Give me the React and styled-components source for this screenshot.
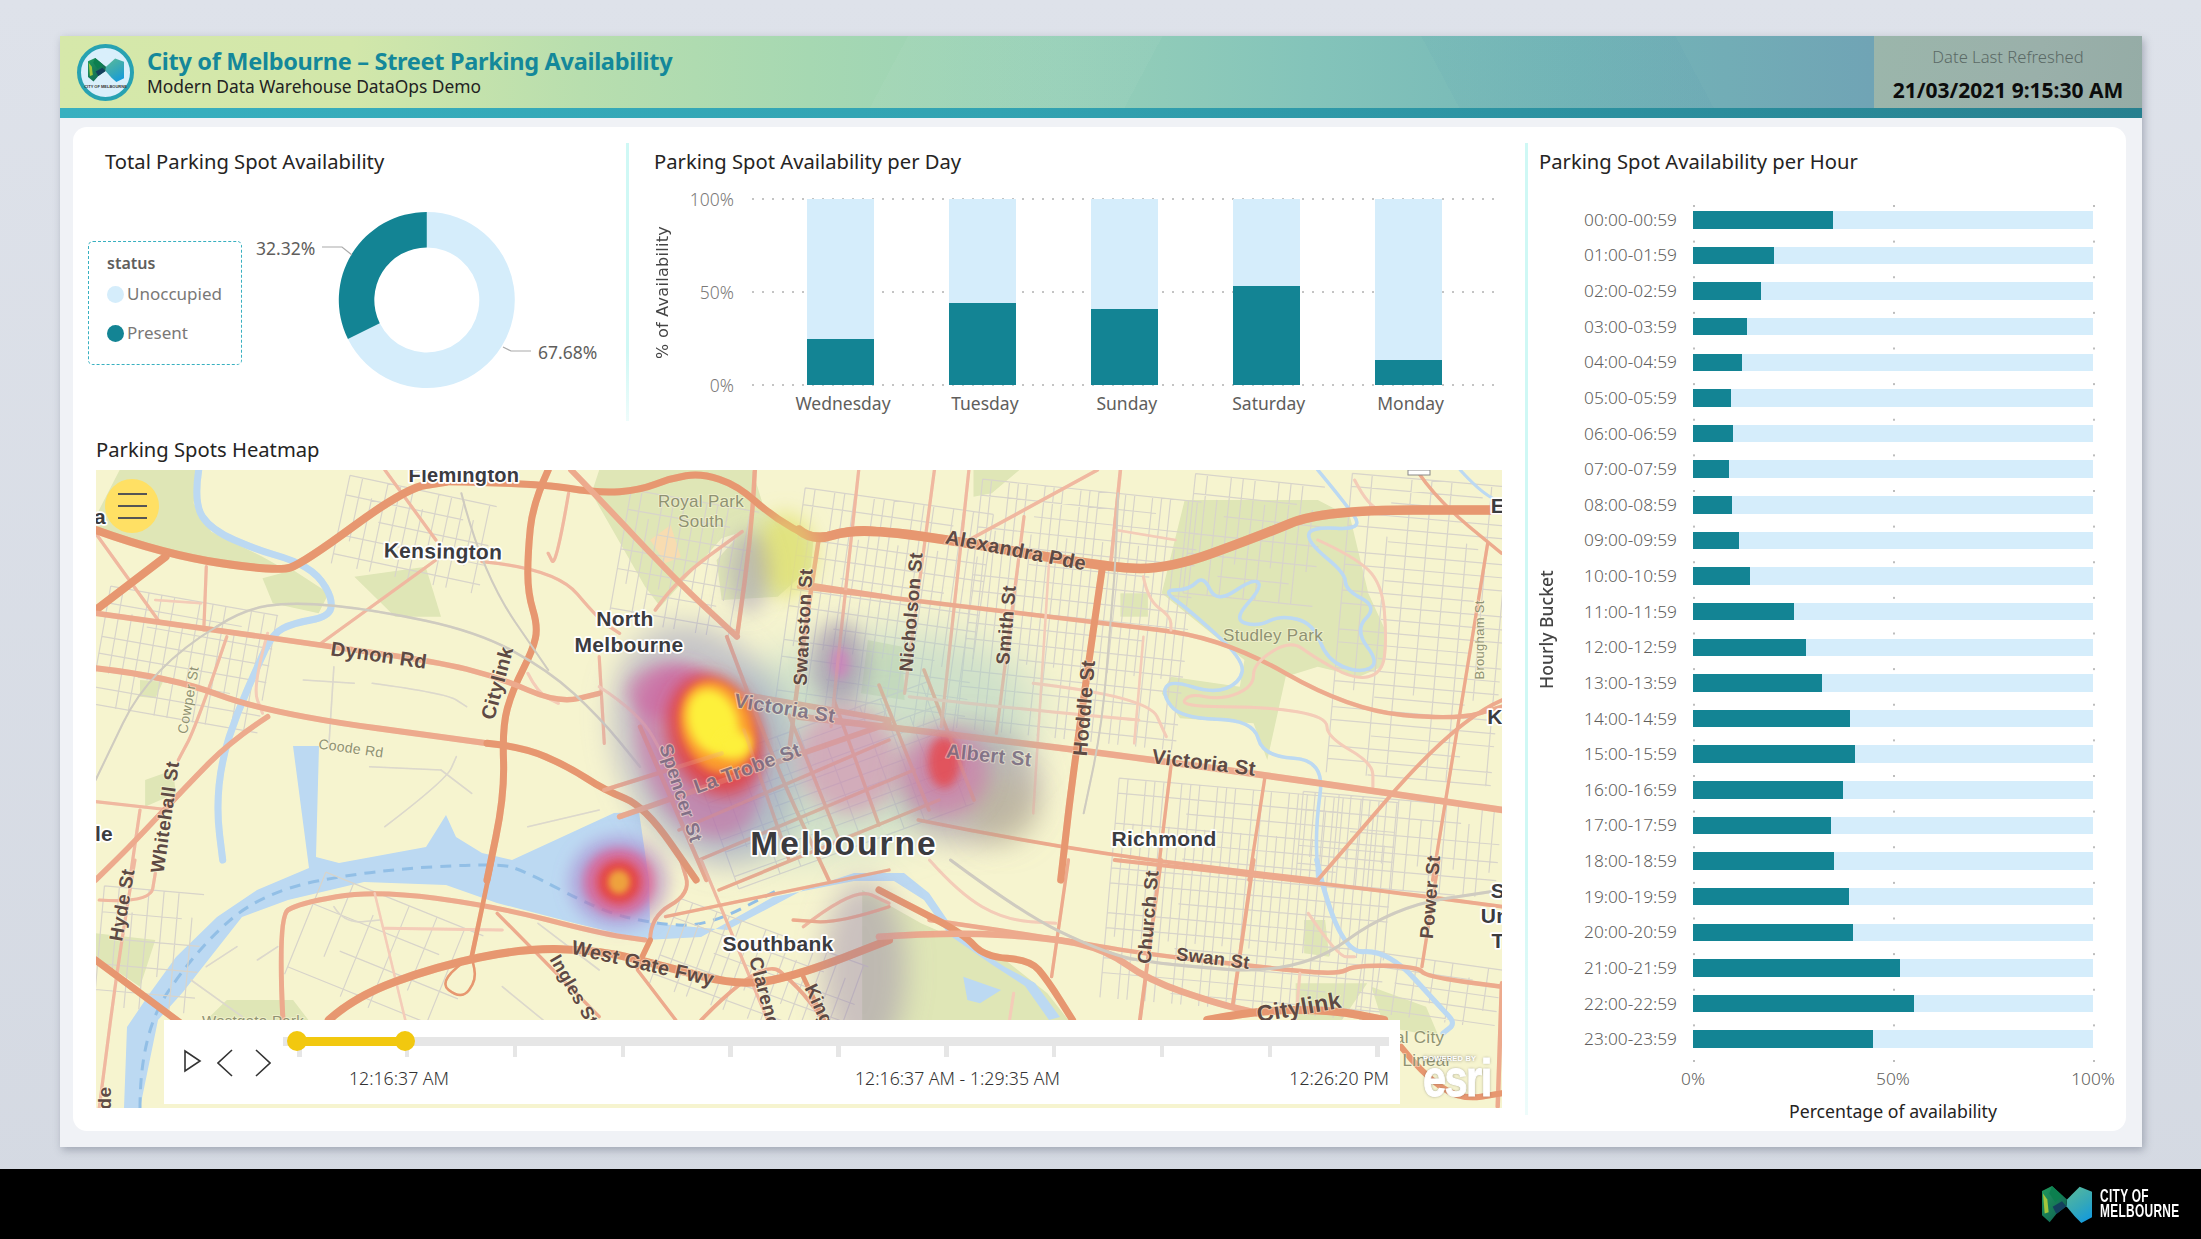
import React from 'react';
import styled, { createGlobalStyle } from 'styled-components';

const TEAL = '#138494';
const PALE = '#d5edfb';
const UI_FONT = '"Noto Sans", "Open Sans", sans-serif';
const MAP_FONT = '"Liberation Sans", Arial, sans-serif';

const GlobalStyle = createGlobalStyle`
  html, body { margin: 0; padding: 0; background: #dde1e9; }
  body { font-family: ${UI_FONT}; }
`;

/* Page shell */

const Page = styled.div`
  width: 2201px;
  height: 1239px;
  display: flex;
  flex-direction: column;
  overflow: hidden;
  background: linear-gradient(180deg, #dee2ea 0%, #d4d9e2 100%);
`;

const Stage = styled.main`
  flex: 1;
  min-height: 0;
  display: flex;
  padding: 36px 59px 22px 60px;
`;

const Report = styled.div`
  flex: 1;
  display: flex;
  flex-direction: column;
  background: #f0f2f6;
  box-shadow: 2px 3px 8px rgba(60, 70, 90, 0.35);
`;

const Header = styled.header`
  height: 72px;
  display: flex;
  align-items: stretch;
  background:
    linear-gradient(118deg, transparent 0 40%, rgba(255, 255, 255, 0.035) 40% 52%, transparent 52%),
    linear-gradient(62deg, transparent 0 66%, rgba(60, 130, 170, 0.05) 66% 78%, transparent 78%),
    linear-gradient(90deg, #d6e8aa 0%, #d2e7aa 14%, #b8deae 25%, #a6d8b2 36%, #97d0b8 48%, #84c4ba 60%, #74b6b7 73%, #70a4b5 87%, #7292b3 100%);
`;

const Brand = styled.div`
  flex: 1;
  display: flex;
  align-items: center;
  gap: 13px;
  padding-left: 17px;
`;

const Badge = styled.div`
  width: 57px;
  height: 57px;
  box-sizing: border-box;
  border: 4px solid #27a2b2;
  border-radius: 50%;
  background: #d9effb;
  display: flex;
  flex-direction: column;
  align-items: center;
  justify-content: center;
  gap: 2px;
  padding-top: 2px;
`;

const BadgeText = styled.span`
  font: 700 4px/5px ${MAP_FONT};
  color: #333;
  white-space: nowrap;
`;

const BrandText = styled.div`
  display: flex;
  flex-direction: column;
`;

const ReportTitle = styled.h1`
  margin: 0;
  font: 700 23.5px/30px ${UI_FONT};
  letter-spacing: -0.3px;
  color: #14889a;
  white-space: nowrap;
`;

const ReportSubtitle = styled.div`
  margin-top: -2px;
  font: 400 17.4px/24px ${UI_FONT};
  color: #222;
  white-space: nowrap;
`;

const DateBox = styled.div`
  width: 268px;
  display: flex;
  flex-direction: column;
  align-items: center;
  background: linear-gradient(100deg, #9bb6ab, #9ab0aa 60%, #95aca6);
`;

const DateLabel = styled.div`
  margin-top: 9px;
  font: 300 16.6px/24px ${UI_FONT};
  color: #5b6a66;
`;

const DateValue = styled.div`
  margin-top: 8px;
  font: 700 21px/26px ${UI_FONT};
  color: #0c0c0c;
  white-space: nowrap;
`;

const AccentBar = styled.div`
  height: 10px;
  background: linear-gradient(90deg, #38b0c0 0%, #32a3b2 45%, #27808f 100%);
`;

const Body = styled.div`
  flex: 1;
  min-height: 0;
  display: flex;
  padding: 9px 16px 16px 13px;
`;

const Panel = styled.div`
  flex: 1;
  display: grid;
  grid-template-columns: 1452px 1fr;
  background: #fff;
  border-radius: 14px;
`;

const LeftColumn = styled.div`
  display: flex;
  flex-direction: column;
`;

const TopRow = styled.div`
  height: 308px;
  display: grid;
  grid-template-columns: 553px 1fr;
`;

const Section = styled.section`
  position: relative;
  min-width: 0;
  padding-top: 20px;
  padding-left: ${p => p.$inset}px;
  ${p => p.$divider && `
    &::before {
      content: '';
      position: absolute;
      left: 0;
      top: 16px;
      bottom: ${p.$divider}px;
      width: 3px;
      background: linear-gradient(180deg, #cff8f5 0%, #cff8f5 75%, #eefcfb 100%);
    }
  `}
`;

const SectionTitle = styled.h2`
  margin: 0;
  font: 400 20.2px/28px ${UI_FONT};
  color: #252423;
  white-space: nowrap;
`;

/* Donut */

const DonutRow = styled.div`
  display: flex;
  align-items: flex-start;
  margin-top: 25px;
  margin-left: -17px;
`;

const Legend = styled.div`
  width: 154px;
  height: 124px;
  box-sizing: border-box;
  margin-top: 41px;
  margin-right: 8px;
  padding: 9px 0 0 18px;
  border: 1.5px dashed #38b0c0;
  border-radius: 5px;
`;

const LegendTitle = styled.div`
  font: 600 16px/24px ${UI_FONT};
  color: #605e5c;
`;

const LegendItem = styled.div`
  display: flex;
  align-items: center;
  gap: 3px;
  margin-top: ${p => p.$gap}px;
  font: 400 17px/24px ${UI_FONT};
  color: #7a7876;
`;

const LegendDot = styled.span`
  width: 17px;
  height: 17px;
  border-radius: 50%;
  background: ${p => p.$color};
`;

const DonutLabel = styled.text`
  font: 400 17.5px ${UI_FONT};
  fill: #605e5c;
`;

/* Charts */

const DayChart = styled.div`
  display: flex;
  margin-top: 24px;
  margin-left: -6px;
`;

const VerticalTitle = styled.div`
  writing-mode: vertical-rl;
  transform: rotate(180deg);
  text-align: center;
  white-space: nowrap;
  width: ${p => p.$width}px;
  height: ${p => p.$height}px;
  color: #444;
  font: ${p => p.$wide ? `400 16px/${p.$width}px "DejaVu Sans", sans-serif` : `500 17.6px/${p.$width}px ${UI_FONT}`};
  letter-spacing: ${p => (p.$wide ? 0.3 : 0)}px;
`;

const DayTicks = styled.div`
  width: 56px;
  height: 210px;
  margin-top: -12px;
  display: flex;
  flex-direction: column;
  justify-content: space-between;
  align-items: flex-end;
  font: 300 17.5px/24px ${UI_FONT};
  color: #7b7977;
`;

const DayPlot = styled.div`
  width: 748px;
  margin-left: 18px;
`;

const DayBars = styled.div`
  position: relative;
  height: 186px;
  display: flex;
  gap: 74.9px;
  padding-left: 55px;
`;

const GridLine = styled.i`
  position: absolute;
  left: 0;
  right: 0;
  top: ${p => p.$top}%;
  height: 2px;
  margin-top: -1px;
  background: repeating-linear-gradient(90deg, #c4c4c4 0 2px, transparent 2px 10px);
`;

const DayBar = styled.div`
  position: relative;
  width: 67px;
  height: 100%;
  display: flex;
  align-items: flex-end;
  background: ${PALE};
`;

const DayFill = styled.div`
  width: 100%;
  background: ${TEAL};
`;

const DayLabels = styled.div`
  display: flex;
  gap: 74.9px;
  padding-left: 55px;
  margin-top: 6px;
`;

const DayLabel = styled.div`
  width: 67px;
  padding-left: 5px;
  box-sizing: border-box;
  display: flex;
  justify-content: center;
  font: 400 17.5px/24px ${UI_FONT};
  color: #605e5c;
`;

const HourChart = styled.div`
  display: flex;
  margin-top: 27px;
  margin-left: -6px;
`;

const HourAxisWrap = styled.div`
  width: 26px;
  height: 856px;
  display: flex;
  align-items: center;
`;

const HourMain = styled.div`
  display: flex;
  flex-direction: column;
`;

const HourRows = styled.div`
  position: relative;
  display: flex;
  flex-direction: column;
`;

const HourRow = styled.div`
  height: 35.64px;
  display: flex;
  align-items: center;
  gap: 16px;
`;

const HourLabel = styled.div`
  width: 118px;
  text-align: right;
  font: 300 17.3px/24px ${UI_FONT};
  color: #605e5c;
  white-space: nowrap;
`;

const HourTrack = styled.div`
  position: relative;
  width: 400px;
  height: 17.5px;
  background: ${PALE};
`;

const HourFill = styled.div`
  height: 100%;
  background: ${TEAL};
`;

const VGrid = styled.i`
  position: absolute;
  top: 3px;
  bottom: -5px;
  left: ${p => 134 + p.$pct * 4}px;
  width: 2px;
  background: repeating-linear-gradient(180deg, #bdbdbd 0 2px, transparent 2px 35.64px);
  background-size: 2px 35.64px;
`;

const HourTicks = styled.div`
  display: flex;
  justify-content: space-between;
  width: 400px;
  margin-left: 134px;
  margin-top: 10px;
`;

const HourTick = styled.div`
  width: 0;
  display: flex;
  justify-content: center;
  font: 300 17.3px/24px ${UI_FONT};
  color: #605e5c;
`;

const HourAxisTitle = styled.div`
  width: 400px;
  margin-left: 134px;
  margin-top: 6px;
  text-align: center;
  font: 400 17.7px/28px ${UI_FONT};
  color: #252423;
`;

/* Map */

const HeatmapBlock = styled.div`
  padding-left: 23px;
`;

const MapFrame = styled.div`
  position: relative;
  width: 1406px;
  height: 638px;
  margin-top: 7px;
  overflow: hidden;
  background: #f6f4cf;
`;

const MapSvg = styled.svg`
  display: block;
  width: 1406px;
  height: 638px;
`;

const MapText = styled.text`
  font-family: ${MAP_FONT};
  font-size: ${p => p.$size}px;
  font-weight: ${p => (p.$kind === 'muted' ? 400 : 700)};
  letter-spacing: ${p => (p.$size > 24 ? 2 : 0.3)}px;
  fill: ${p => ({ place: '#3b3b3f', road: '#5e4a44', muted: '#8f9272', faded: '#6d5f78' }[p.$kind])};
  fill-opacity: ${p => (p.$kind === 'faded' ? 0.8 : 1)};
  paint-order: stroke;
  stroke: ${p => (p.$kind === 'place' ? '#fff' : 'rgba(255,250,225,.45)')};
  stroke-width: ${p => (p.$kind === 'place' ? 3.5 : 2)}px;
  stroke-linejoin: round;
  text-anchor: middle;
  dominant-baseline: central;
`;

const MenuButton = styled.button`
  position: absolute;
  left: 9px;
  top: 9px;
  width: 54px;
  height: 54px;
  border: 0;
  padding: 0;
  border-radius: 50%;
  background: #ffe064;
  display: flex;
  flex-direction: column;
  align-items: center;
  justify-content: center;
  gap: 10px;
`;

const MenuLine = styled.span`
  width: 29px;
  height: 2px;
  background: #555;
`;

const EsriMark = styled.div`
  position: absolute;
  right: 9px;
  bottom: 2px;
  width: 70px;
  height: 52px;
  color: #fff;
  text-shadow: 0 0 3px rgba(60, 60, 60, 0.6);
`;

const EsriSmall = styled.div`
  font: 700 7.5px/10px ${MAP_FONT};
  letter-spacing: 0.2px;
  white-space: nowrap;
`;

const EsriWord = styled.div`
  margin-top: -12px;
  font: 700 52px/52px ${MAP_FONT};
  letter-spacing: -2px;
  -webkit-text-stroke: 1px #fff;
  transform: scaleX(0.8);
  transform-origin: left center;
`;

const TimeBar = styled.div`
  position: absolute;
  left: 68px;
  bottom: 4px;
  width: 1236px;
  height: 84px;
  display: flex;
  background: #fff;
`;

const PlayControls = styled.div`
  width: 119px;
  padding: 29px 0 0 20px;
  box-sizing: border-box;
  display: flex;
  align-items: flex-start;
  gap: 15px;
`;

const ControlIcon = styled.svg`
  display: block;
  fill: none;
  stroke: #333;
  stroke-width: 1.6;
  margin-left: ${p => p.$shift || 0}px;
`;

const Timeline = styled.div`
  width: 1106px;
  padding-top: 17px;
`;

const Track = styled.div`
  position: relative;
  height: 8.5px;
  background: #e6e6e6;
`;

const TrackRange = styled.div`
  position: absolute;
  top: 0;
  bottom: 0;
  left: 14px;
  width: 108px;
  background: #f2c80f;
`;

const Handle = styled.span`
  position: absolute;
  top: -6px;
  left: ${p => p.$left}px;
  width: 20px;
  height: 20px;
  border-radius: 50%;
  background: #f2c80f;
`;

const TickRow = styled.div`
  display: flex;
  justify-content: space-between;
  padding: 0 9px 0 14px;
`;

const Tick = styled.span`
  width: 4.5px;
  height: 11px;
  background: #e6e6e6;
`;

const TimeLabels = styled.div`
  display: flex;
  margin-top: 9px;
  padding: 0 0 0 66px;
  font: 300 17.7px/24px ${UI_FONT};
  color: #333;
  white-space: nowrap;
`;

const TimeMiddle = styled.span`
  margin-left: 406px;
`;

const TimeEnd = styled.span`
  margin-left: auto;
`;

/* Footer */

const Footer = styled.footer`
  height: 70px;
  display: flex;
  align-items: center;
  justify-content: flex-end;
  gap: 8px;
  padding-right: 20px;
  background: #000;
`;

const FooterWords = styled.div`
  width: 81px;
  color: #fff;
  font: 700 18px/15.5px ${MAP_FONT};
  letter-spacing: 0.5px;
  white-space: nowrap;
`;

const FooterWord = styled.div`
  transform: scaleX(0.66);
  transform-origin: left center;
`;

/* Data */

const DAYS = [
  { name: 'Wednesday', pct: 24.5 },
  { name: 'Tuesday', pct: 44 },
  { name: 'Sunday', pct: 41 },
  { name: 'Saturday', pct: 53.3 },
  { name: 'Monday', pct: 13.6 },
];

const HOURS = [34.9, 20.3, 17.1, 13.6, 12.2, 9.4, 10.1, 9.0, 9.8, 11.5, 14.3, 25.2, 28.3, 32.2, 39.2, 40.6, 37.4, 34.6, 35.3, 39.1, 39.9, 51.8, 55.2, 45];
const pad = n => String(n).padStart(2, '0');

// the map svg is written in screenshot pixels; the zones are the crops I read the roads from
const ZONE = {
  0: (x, y) => [x, y],
  5: (x, y) => [90 + x / 1.96, 460 + y / 3],
  6: (x, y) => [800 + x / 2.178, 460 + y / 3],
  7: (x, y) => [90 + x / 1.96, 860 + y / 3],
  8: (x, y) => [880 + x / 2.376, 860 + y / 3],
};

const ROAD_COLORS = { a: '#e79770', b: '#edaa8d', c: '#f0b8a0', d: '#f4ccb8', w: '#bcd9f2', r: '#cfcbc0', g: '#dcd8cc' };

const smooth = (zone, flat) => {
  const pts = [];
  for (let i = 0; i < flat.length; i += 2) pts.push(ZONE[zone](flat[i], flat[i + 1]));
  let d = `M${pts[0][0].toFixed(1)} ${pts[0][1].toFixed(1)}`;
  for (let i = 1; i < pts.length - 1; i++) {
    const mx = (pts[i][0] + pts[i + 1][0]) / 2;
    const my = (pts[i][1] + pts[i + 1][1]) / 2;
    d += `Q${pts[i][0].toFixed(1)} ${pts[i][1].toFixed(1)} ${mx.toFixed(1)} ${my.toFixed(1)}`;
  }
  const last = pts[pts.length - 1];
  return `${d}L${last[0].toFixed(1)} ${last[1].toFixed(1)}`;
};

const poly = (zone, flat) => {
  const out = [];
  for (let i = 0; i < flat.length; i += 2) out.push(ZONE[zone](flat[i], flat[i + 1]).map(v => v.toFixed(1)).join(','));
  return out.join(' ');
};

const PARKS = [
  [5, [1000, 30, 1300, 30, 1320, 130, 1350, 190, 1420, 240, 1415, 320, 1350, 410, 1240, 420, 1230, 300, 1280, 215, 1240, 235, 1120, 440, 1090, 380, 985, 100]],
  [5, [60, 30, 215, 30, 205, 130, 240, 215, 340, 290, 380, 325, 250, 300, 150, 270, 13, 205, 13, 170]],
  [5, [340, 355, 400, 330, 470, 400, 450, 460, 360, 430]],
  [5, [520, 350, 660, 320, 690, 470, 600, 470]],
  [5, [100, 660, 145, 665, 130, 715, 100, 710]],
  [5, [110, 960, 165, 930, 170, 1000, 110, 1040]],
  [6, [840, 120, 1130, 120, 1200, 170, 1240, 400, 1280, 520, 1270, 620, 1220, 650, 1130, 620, 1060, 650, 1020, 900, 990, 790, 830, 775, 790, 700, 810, 650, 960, 680, 970, 600, 790, 400]],
  [6, [150, 540, 225, 560, 230, 720, 135, 700]],
  [6, [380, 30, 480, 30, 420, 100, 380, 110]],
  [6, [700, 400, 760, 400, 760, 470, 700, 470]],
  [8, [-40, 90, 100, 190, 300, 300, 400, 400, 450, 480, -40, 480]],
  [8, [990, 370, 1160, 370, 1100, 480, 990, 480]],
  [8, [1170, 380, 1300, 440, 1330, 530, 1200, 500]],
  [8, [1010, 180, 1060, 180, 1070, 290, 1010, 280]],
  [7, [230, 480, 270, 420, 400, 420, 430, 480]],
  [7, [13, 220, 130, 240, 100, 380, 13, 290]],
];

const ROADS = [
  // water courses drawn as lines
  [5, 'w', 7, [215, 30, 205, 130, 240, 210, 330, 270, 400, 300, 450, 345, 478, 420, 470, 470, 400, 490, 360, 520, 330, 620, 290, 760, 260, 900, 250, 1050, 262, 1200]],
  [6, 'w', 3.5, [1130, 30, 1190, 130, 1230, 210, 1110, 200, 1110, 250, 1190, 340, 1190, 390, 1260, 440, 1210, 510, 1265, 610, 1220, 640, 1150, 600, 1120, 490, 1050, 465, 1000, 500, 945, 480, 1010, 380, 990, 355, 910, 430, 880, 345, 850, 390, 790, 390, 850, 450, 970, 600, 960, 670, 900, 700, 810, 660, 790, 700, 830, 775, 990, 780, 1010, 890, 1145, 900, 1125, 1100, 1130, 1260]],
  [6, 'w', 3, [1440, 30, 1480, 90, 1530, 130]],
  [8, 'w', 5, [1040, 0, 1090, 280, 1210, 270, 1340, 450, 1370, 490, 1340, 520]],
  // faint back streets
  [5, 'g', 1.6, [420, 660, 520, 670]],
  [5, 'g', 1.6, [555, 670, 700, 700, 740, 740]],
  [5, 'g', 1.6, [550, 920, 690, 930]],
  [5, 'g', 1.6, [580, 1100, 700, 960, 720, 890]],
  [5, 'g', 1.6, [690, 930, 750, 1000]],
  [5, 'g', 1.6, [480, 620, 470, 860]],
  [5, 'g', 1.6, [860, 1100, 1000, 1050]],
  [7, 'g', 1.6, [230, 320, 290, 260]],
  [7, 'g', 1.6, [330, 300, 370, 260]],
  [7, 'g', 1.6, [480, 140, 500, 190, 570, 180]],
  [7, 'g', 1.6, [810, 380, 890, 480]],
  [7, 'g', 1.6, [880, 190, 1000, 330]],
  [7, 'g', 1.6, [200, 360, 300, 470]],
  // minor roads
  [5, 'c', 3.2, [270, 530, 210, 800, 175, 900]],
  [5, 'c', 3.2, [230, 320, 225, 510]],
  [5, 'c', 3.2, [13, 220, 140, 490]],
  [5, 'c', 3.2, [680, 300, 450, 555]],
  [5, 'c', 3.2, [770, 305, 915, 325, 1000, 480, 1040, 520]],
  [5, 'c', 3.5, [1110, 450, 1150, 360, 1280, 215]],
  [5, 'c', 3.2, [940, 100, 915, 325, 900, 280]],
  [5, 'c', 3.2, [580, 30, 680, 240]],
  [5, 'c', 3.2, [13, 1025, 160, 1050]],
  [5, 'c', 3.2, [100, 1050, 80, 1260]],
  [5, 'c', 3.2, [1000, 590, 1010, 850]],
  [5, 'd', 3, [860, 640, 880, 700, 920, 730]],
  [5, 'd', 3, [1000, 680, 1080, 760, 1130, 900]],
  [5, 'd', 3, [350, 520, 320, 680, 340, 760]],
  [5, 'd', 2.5, [130, 420, 220, 430]],
  [5, 'b', 4.4, [1305, 30, 1300, 200, 1270, 530]],
  [5, 'b', 4.4, [1430, 240, 1400, 540, 1370, 900]],
  [5, 'b', 4.4, [1080, 800, 1210, 1260]],
  [5, 'b', 3.8, [1250, 530, 1340, 900, 1450, 1260]],
  [5, 'b', 3.8, [1420, 375, 1568, 410]],
  // CBD grid, mostly seen through the heat
  [0, 'b', 3.5, [680, 830, 890, 740]],
  [0, 'b', 3.5, [700, 860, 915, 770]],
  [0, 'b', 3.5, [720, 890, 940, 800]],
  [0, 'b', 3.5, [745, 730, 790, 860]],
  [0, 'b', 3.5, [790, 715, 840, 840]],
  [0, 'b', 3.5, [835, 700, 880, 825]],
  [0, 'b', 3.5, [880, 685, 930, 810]],
  [0, 'b', 3.5, [925, 670, 975, 800]],
  [6, 'c', 3.2, [130, 30, 100, 400, 70, 800]],
  [6, 'c', 3.2, [295, 30, 230, 700]],
  [6, 'c', 3.2, [370, 30, 310, 800]],
  [6, 'c', 3.2, [490, 170, 430, 820]],
  [6, 'c', 3.5, [700, 30, 680, 300]],
  [6, 'c', 3.5, [650, 30, 370, 240]],
  [6, 'b', 4.4, [0, 380, 650, 490, 920, 530, 1200, 750, 1430, 780, 1532, 740]],
  [6, 'b', 3.8, [1532, 720, 1430, 780, 1130, 1260]],
  [6, 'b', 3.3, [1500, 250, 1380, 1260]],
  [6, 'b', 3.3, [810, 920, 780, 1260]],
  [6, 'b', 3.3, [1015, 950, 980, 1260]],
  [6, 'b', 3.3, [1350, 40, 1390, 120, 1530, 280]],
  [6, 'b', 3.8, [260, 1080, 580, 1170, 1130, 1260]],
  [6, 'd', 3, [1210, 60, 1240, 140, 1290, 160]],
  [6, 'd', 3, [1130, 240, 1210, 290, 1270, 370, 1280, 540, 1270, 640, 1210, 660, 1120, 590, 1070, 540, 990, 610, 990, 680, 920, 720, 850, 700, 830, 740, 1020, 740, 1150, 770, 1150, 830, 1250, 910, 1250, 980]],
  [6, 'd', 3, [750, 350, 760, 420, 810, 470, 810, 510]],
  [6, 'd', 3, [510, 670, 760, 710, 800, 830]],
  [6, 'd', 3, [240, 710, 500, 750, 740, 780]],
  [6, 'd', 2.5, [690, 210, 820, 240]],
  [6, 'd', 2.5, [545, 300, 510, 1060]],
  [6, 'd', 2.5, [750, 530, 730, 850]],
  [7, 'c', 3.2, [90, 0, 60, 270, 20, 745]],
  [7, 'c', 3.2, [20, 120, 120, 130, 130, 40]],
  [7, 'b', 5, [380, 480, 370, 170, 410, 130, 560, 90, 800, 140, 1000, 220, 1090, 240]],
  [7, 'd', 3, [580, 205, 810, 210]],
  [7, 'd', 2.5, [560, 100, 620, 480]],
  [7, 'b', 3.3, [800, 160, 1000, 470]],
  [7, 'b', 3.3, [1075, 330, 1150, 480]],
  [7, 'b', 3.8, [1100, 240, 1100, 170, 1180, 100, 1160, 0]],
  [7, 'c', 3.2, [1200, 0, 1330, 480]],
  [7, 'c', 3.2, [1400, 200, 1500, 80, 1568, 130]],
  [7, 'b', 3.8, [1200, 480, 1320, 290, 1390, 380, 1440, 480]],
  [7, 'b', 3.3, [1568, 140, 1470, 190, 1380, 180]],
  [7, 'b', 3.3, [1130, 170, 1568, 30]],
  [8, 'b', 3.3, [450, 0, 410, 350]],
  [8, 'b', 3.8, [670, 0, 620, 480]],
  [8, 'b', 3.8, [890, 0, 840, 440]],
  [8, 'b', 3.3, [1330, 0, 1290, 320]],
  [8, 'b', 3.8, [560, 0, 1060, 70, 1480, 140]],
  [8, 'b', 4.4, [120, 180, 420, 235, 620, 280, 900, 320, 1090, 345, 1130, 315, 1280, 320, 1300, 350, 1480, 380]],
  [8, 'd', 3, [1000, 340, 990, 480]],
  [8, 'd', 3, [1020, 160, 1090, 290, 1130, 290]],
  [8, 'd', 3, [120, 0, 190, 100, 300, 180, 420, 190]],
  [8, 'b', 4.4, [1480, 370, 1470, 740]],
  [8, 'd', 3, [320, 400, 310, 480]],
  // main roads
  [5, 'a', 8, [13, 210, 150, 285, 370, 335, 420, 310, 620, 85, 700, 65]],
  [5, 'a', 7, [700, 65, 880, 70, 1000, 100, 1080, 90, 1140, 55, 1200, 40, 1270, 75, 1340, 170, 1420, 240, 1500, 205, 1568, 215]],
  [5, 'a', 8, [13, 450, 150, 290]],
  [5, 'a', 7, [900, 30, 870, 130, 860, 280, 860, 400, 880, 500, 870, 570, 830, 690, 810, 800, 815, 1000, 780, 1260]],
  [5, 'b', 6, [945, 30, 990, 100, 1150, 360, 1270, 530]],
  [5, 'b', 5.5, [13, 460, 250, 510, 450, 555, 680, 605, 800, 650, 920, 730, 1000, 700]],
  [5, 'b', 6, [13, 625, 160, 650, 350, 760, 780, 850]],
  [5, 'a', 7, [780, 850, 850, 860, 940, 920, 1010, 990, 1090, 1040, 1190, 1260]],
  [5, 'b', 5.5, [350, 770, 280, 840, 190, 980, 80, 1160, 13, 1260]],
  [5, 'b', 5.5, [1040, 1070, 1568, 790]],
  [5, 'b', 4.4, [1010, 990, 1240, 880]],
  [5, 'b', 5.5, [1270, 700, 1568, 780]],
  [6, 'b', 6.6, [0, 770, 500, 850, 1015, 945, 1532, 1050]],
  [6, 'a', 9.5, [0, 210, 30, 245, 120, 205, 310, 235, 660, 320, 800, 330, 1000, 230, 1140, 150, 1532, 150]],
  [6, 'a', 7, [660, 330, 600, 900, 570, 1260]],
  [7, 'a', 8, [470, 480, 520, 410, 680, 320, 850, 265, 1000, 270, 1130, 320, 1280, 380, 1400, 340, 1568, 240]],
  [7, 'a', 4.6, [790, 0, 750, 290]],
  [7, 'a', 2.5, [750, 290, 680, 360, 730, 420, 760, 360, 750, 290]],
  [7, 'a', 7, [13, 300, 180, 490]],
  [7, 'a', 5.5, [1075, 320, 1100, 240]],
  [7, 'a', 4.6, [1400, 350, 1440, 480]],
  [8, 'a', 7, [0, 90, 60, 130, 200, 220, 250, 290, 360, 300, 400, 360, 460, 480]],
  [8, 'b', 6.6, [0, 230, 170, 215, 420, 235, 540, 270, 640, 360, 800, 430, 900, 460]],
  [8, 'a', 8, [780, 480, 900, 450, 1080, 450, 1200, 480]],
  [8, 'a', 6, [1240, 560, 1290, 640, 1380, 720, 1480, 700]],
  // rail
  [5, 'r', 2.5, [250, 500, 300, 450, 400, 425, 560, 450, 760, 515, 900, 630, 1000, 770, 1080, 920]],
  [5, 'r', 2, [250, 500, 120, 620, 13, 960]],
  [5, 'r', 2, [730, 100, 770, 340, 900, 630]],
  [6, 'r', 2, [695, 100, 690, 300, 680, 460, 660, 800, 620, 1060]],
  [8, 'r', 3, [170, 0, 340, 160, 520, 270, 640, 310, 1000, 345, 1220, 140, 1480, 90]],
];

// neighbourhood street meshes: x, y, w, h, rotation, step across, step along
const MESHES = [
  [340, 490, 150, 90, 12, 13, 20],
  [100, 600, 170, 120, 10, 13, 17],
  [620, 500, 130, 130, 10, 11, 20],
  [790, 500, 190, 220, 8, 10, 17],
  [970, 490, 220, 250, 6, 9, 16],
  [1190, 480, 130, 120, 6, 12, 20],
  [1340, 480, 165, 300, 5, 20, 13],
  [1110, 790, 280, 220, 5, 9, 15],
  [1300, 800, 200, 90, 5, 12, 18],
  [710, 720, 250, 130, -20, 22, 13],
  [660, 930, 200, 90, 20, 13, 20],
  [300, 900, 170, 110, 22, 30, 34],
  [100, 890, 100, 120, 5, 15, 26],
  [1360, 960, 140, 60, 8, 18, 14],
];

const meshPath = ([x, y, w, h, , a, b]) => {
  let d = '';
  for (let i = 0; i <= w / a; i++) {
    // every few streets is cut short so it doesn't read as a perfect grid
    const end = i % 3 === 1 ? h * 0.72 : h;
    d += `M${x + i * a} ${y + (i % 4 === 2 ? h * 0.2 : 0)}V${y + end}`;
  }
  for (let j = 0; j <= h / b; j++) {
    d += `M${x + (j % 3 === 2 ? w * 0.25 : 0)} ${y + j * b}H${x + (j % 4 === 1 ? w * 0.8 : w)}`;
  }
  return d;
};

const LABELS = [
  ['Flemington', 465, 475, 0, 20, 'place'],
  ['Kensington', 444, 551, 1, 21, 'place'],
  ['Royal Park', 702, 501, 0, 17, 'muted'],
  ['South', 702, 521, 0, 17, 'muted'],
  ['North', 626, 618, 0, 21, 'place'],
  ['Melbourne', 630, 644, 0, 21, 'place'],
  ['Dynon Rd', 380, 655, 8, 20, 'road'],
  ['Citylink', 498, 683, -75, 20, 'road'],
  ['Swanston St', 804, 627, -87, 19, 'road'],
  ['Victoria St', 786, 708, 9, 20, 'faded'],
  ['La Trobe St', 748, 768, -20, 20, 'faded'],
  ['Spencer St', 682, 793, 72, 19, 'faded'],
  ['Coode Rd', 352, 748, 8, 14, 'muted'],
  ['Cowper St', 189, 700, -80, 14, 'muted'],
  ['Whitehall St', 166, 817, -82, 19, 'road'],
  ['Melbourne', 845, 843, 0, 33.5, 'place'],
  ['Nicholson St', 912, 612, -85, 19, 'road'],
  ['Smith St', 1007, 625, -85, 19, 'road'],
  ['Hoddle St', 1085, 708, -85, 20, 'road'],
  ['Alexandra Pde', 1017, 550, 11, 20, 'road'],
  ['Victoria St', 1205, 762, 7, 20.5, 'road'],
  ['Albert St', 990, 755, 6, 20, 'faded'],
  ['Studley Park', 1274, 635, 0, 17, 'muted'],
  ['Richmond', 1165, 838, 0, 21, 'place'],
  ['Brougham St', 1480, 640, -90, 13, 'muted'],
  ['K', 1496, 716, 0, 21, 'place'],
  ['E', 1499, 505, 0, 21, 'place'],
  ['a', 101, 516, 0, 21, 'place'],
  ['le', 105, 833, 0, 21, 'place'],
  ['Hyde St', 123, 905, -80, 19, 'road'],
  ['Southbank', 779, 943, 0, 21, 'place'],
  ['West Gate Fwy', 644, 963, 13, 20, 'road'],
  ['Ingles St', 575, 990, 60, 18, 'road'],
  ['Clarendon St', 772, 1016, 75, 19, 'road'],
  ['Kings Way', 832, 1030, 65, 19, 'road'],
  ['Church St', 1149, 917, -85, 19, 'road'],
  ['Swan St', 1214, 958, 7, 18.5, 'road'],
  ['Citylink', 1300, 1007, -10, 23, 'road'],
  ['Power St', 1431, 897, -85, 19, 'road'],
  ['S', 1499, 890, 0, 21, 'place'],
  ['Un', 1496, 915, 0, 21, 'place'],
  ['T', 1499, 940, 0, 21, 'place'],
  ['Westgate Park', 254, 1020, 0, 15, 'muted'],
  ['Capital City', 1400, 1037, 0, 17, 'muted'],
  ['Linear', 1428, 1060, 0, 17, 'muted'],
  ['de', 105, 1098, -90, 19, 'road'],
];

// heat layers, painted from the outer haze inward: cx, cy, rx, ry, rotation, colour, blur
const HEAT = [
  [850, 745, 195, 105, -15, 'rgba(168,205,195,.5)', 'b20'],
  [786, 555, 30, 42, 0, 'rgba(226,226,110,.75)', 'b10'],
  [750, 572, 20, 42, 0, 'rgba(150,140,175,.45)', 'b10'],
  [840, 663, 28, 42, 0, 'rgba(150,125,165,.55)', 'b10'],
  [841, 663, 9, 16, 0, 'rgba(222,110,190,.55)', 'b5'],
  [705, 745, 88, 125, -20, 'rgba(140,140,190,.45)', 'b14'],
  [970, 785, 72, 60, 0, 'rgba(155,140,160,.5)', 'b14'],
  [865, 970, 42, 90, 0, 'rgba(150,130,170,.45)', 'b14'],
  [1005, 810, 35, 35, 0, 'rgba(175,170,125,.35)', 'b14'],
  [850, 760, 50, 55, -20, 'rgba(215,100,165,.42)', 'b10'],
  [670, 692, 42, 28, 0, 'rgba(205,95,160,.55)', 'b8'],
  [700, 752, 58, 90, -22, 'rgba(205,90,155,.5)', 'b8'],
  [945, 772, 44, 44, 0, 'rgba(215,105,165,.55)', 'b10'],
  [945, 762, 16, 26, 0, 'rgba(235,60,60,.7)', 'b5'],
  [716, 735, 46, 62, -20, 'rgba(228,60,60,.85)', 'b8'],
  [718, 727, 36, 48, -20, '#fb9b2f', 'b5'],
  [714, 722, 25, 34, -20, '#fdf03a', 'b5'],
  [735, 745, 17, 14, 0, '#fdf03a', 'b5'],
  [620, 882, 50, 46, 0, 'rgba(165,120,200,.5)', 'b8'],
  [620, 882, 36, 34, 0, 'rgba(225,90,140,.7)', 'b5'],
  [620, 882, 22, 22, 0, 'rgba(232,60,50,.85)', 'b5'],
  [620, 882, 11, 12, 0, '#eea23c', 'b3'],
];

const LogoMark = ({ width, height }) => (
  <svg width={width} height={height} viewBox="0 0 150 110" preserveAspectRatio="none">
    <defs>
      <linearGradient id="logoRight" x1="0.2" y1="0" x2="0.7" y2="1">
        <stop offset="0" stopColor="#56b89c" />
        <stop offset="0.55" stopColor="#35a8b8" />
        <stop offset="1" stopColor="#159bdc" />
      </linearGradient>
      <linearGradient id="logoLeft" x1="0" y1="0" x2="1" y2="1">
        <stop offset="0" stopColor="#1f9a5c" />
        <stop offset="1" stopColor="#0f5a52" />
      </linearGradient>
    </defs>
    <polygon points="73,60 75,40 113,2 150,17 150,93 118,110 98,90" fill="url(#logoRight)" />
    <polygon points="0,15 30,0 75,40 73,60 43,83 23,108 0,87" fill="url(#logoLeft)" />
    <polygon points="3,22 16,40 20,78 8,82" fill="#a3c63c" />
    <polygon points="30,0 62,30 40,48 22,22" fill="#0c7f4f" />
    <polygon points="43,83 73,60 60,45 32,62" fill="#143f5c" />
  </svg>
);

const donutSlice = (a0, a1, r0, r1) => {
  const pt = (a, r) => [176.8 + r * Math.sin(a), 100 - r * Math.cos(a)].map(v => v.toFixed(2)).join(' ');
  const large = Math.abs(a1 - a0) > Math.PI ? 1 : 0;
  const sweep = a1 > a0 ? 1 : 0;
  return `M${pt(a0, r1)}A${r1} ${r1} 0 ${large} ${sweep} ${pt(a1, r1)}L${pt(a1, r0)}A${r0} ${r0} 0 ${large} ${1 - sweep} ${pt(a0, r0)}Z`;
};

const Donut = () => {
  const split = -(32.32 / 100) * Math.PI * 2;
  return (
    <svg width="360" height="200" viewBox="0 0 360 200">
      <path d={donutSlice(0, Math.PI * 2 + split, 52.5, 88)} fill={PALE} />
      <path d={donutSlice(0, split, 52.5, 88)} fill={TEAL} />
      <polyline points="72,47 92,47 102,55" fill="none" stroke="#aaa" strokeWidth="1.2" />
      <polyline points="253,147 261,151 281,151" fill="none" stroke="#aaa" strokeWidth="1.2" />
      <DonutLabel x="6" y="55">32.32%</DonutLabel>
      <DonutLabel x="288" y="159">67.68%</DonutLabel>
    </svg>
  );
};

const CityMap = () => (
  <MapSvg viewBox="97 470 1406 638">
    <defs>
      <filter id="soft" x="-2%" y="-2%" width="104%" height="104%"><feGaussianBlur stdDeviation="0.5" /></filter>
      {[3, 5, 8, 10, 14, 20].map(s => (
        <filter key={s} id={`b${s}`} x="-60%" y="-60%" width="220%" height="220%"><feGaussianBlur stdDeviation={s} /></filter>
      ))}
    </defs>
    <g filter="url(#soft)">
      {PARKS.map(([z, pts], i) => <polygon key={i} points={poly(z, pts)} fill="#dfe6b6" />)}
      <polygon
        fill="#bcd9f2"
        points="125,1108 128,1027 151,993 177,957 218,917 258,890 310,868 294,746 320,746 317,857 340,863 427,847 447,815 457,837 483,853 513,860 615,813 640,812 650,880 651,923 728,930 804,890 855,873 905,873 930,893 960,937 1006,967 1036,983 1061,1017 1050,1020 1026,986 995,966 950,935 925,900 895,881 855,881 774,897 702,937 646,940 575,923 498,903 447,885 365,882 289,900 243,917 184,992 159,1020 141,1108"
      />
      <polygon points={poly(8, [200, 350, 290, 390, 240, 430, 210, 420])} fill="#bcd9f2" />
      <polygon points={poly(5, [1100, 240, 1140, 195, 1160, 290, 1130, 310])} fill="#f8dcb0" />
      <path d={smooth(7, [100, 745, 100, 520, 210, 270, 340, 95, 560, 30, 800, 10, 850, 30, 1000, 150, 1100, 190, 1210, 200, 1350, 90])} fill="none" stroke="#92bfe6" strokeWidth="3" strokeDasharray="11 8" />
      {MESHES.map((m, i) => (
        <path
          key={i}
          d={meshPath(m)}
          fill="none"
          stroke="#d8d4ca"
          strokeWidth="1.2"
          transform={`rotate(${m[4]} ${m[0] + m[2] / 2} ${m[1] + m[3] / 2})`}
        />
      ))}
      <g id="roads">
        {ROADS.map(([z, kind, w, pts], i) => (
          <path
            key={i}
            d={smooth(z, pts)}
            fill="none"
            stroke={ROAD_COLORS[kind]}
            strokeWidth={w}
            strokeLinecap="round"
            strokeLinejoin="round"
          />
        ))}
      </g>
    </g>
    <g>
      {HEAT.map(([cx, cy, rx, ry, rot, fill, blur], i) => (
        <ellipse
          key={i}
          cx={cx}
          cy={cy}
          rx={rx}
          ry={ry}
          fill={fill}
          filter={`url(#${blur})`}
          transform={rot ? `rotate(${rot} ${cx} ${cy})` : undefined}
        />
      ))}
    </g>
    {/* the roads still read through the heat in the original */}
    <use href="#roads" opacity="0.28" />
    {LABELS.map(([text, x, y, rot, size, kind], i) => (
      <MapText key={i} x={x} y={y} $size={size} $kind={kind} transform={rot ? `rotate(${rot} ${x} ${y})` : undefined}>
        {text}
      </MapText>
    ))}
    <rect x="1409" y="470" width="22" height="5" fill="#fff" stroke="#888" />
  </MapSvg>
);

const App = () => (
  <Page>
    <GlobalStyle />
    <Stage>
      <Report>
        <Header>
          <Brand>
            <Badge>
              <LogoMark width={36} height={24} />
              <BadgeText>CITY OF MELBOURNE</BadgeText>
            </Badge>
            <BrandText>
              <ReportTitle>City of Melbourne – Street Parking Availability</ReportTitle>
              <ReportSubtitle>Modern Data Warehouse DataOps Demo</ReportSubtitle>
            </BrandText>
          </Brand>
          <DateBox>
            <DateLabel>Date Last Refreshed</DateLabel>
            <DateValue>21/03/2021 9:15:30 AM</DateValue>
          </DateBox>
        </Header>
        <AccentBar />
        <Body>
          <Panel>
            <LeftColumn>
              <TopRow>
                <Section $inset={32}>
                  <SectionTitle>Total Parking Spot Availability</SectionTitle>
                  <DonutRow>
                    <Legend>
                      <LegendTitle>status</LegendTitle>
                      <LegendItem $gap={7}><LegendDot $color={PALE} />Unoccupied</LegendItem>
                      <LegendItem $gap={15}><LegendDot $color={TEAL} />Present</LegendItem>
                    </Legend>
                    <Donut />
                  </DonutRow>
                </Section>
                <Section $inset={28} $divider={14}>
                  <SectionTitle>Parking Spot Availability per Day</SectionTitle>
                  <DayChart>
                    <VerticalTitle $width={30} $height={186} $wide>% of Availability</VerticalTitle>
                    <DayTicks><span>100%</span><span>50%</span><span>0%</span></DayTicks>
                    <DayPlot>
                      <DayBars>
                        <GridLine $top={0} />
                        <GridLine $top={50} />
                        <GridLine $top={100} />
                        {DAYS.map(d => (
                          <DayBar key={d.name}>
                            <DayFill style={{ height: `${d.pct}%` }} />
                          </DayBar>
                        ))}
                      </DayBars>
                      <DayLabels>
                        {DAYS.map(d => <DayLabel key={d.name}>{d.name}</DayLabel>)}
                      </DayLabels>
                    </DayPlot>
                  </DayChart>
                </Section>
              </TopRow>
              <HeatmapBlock>
                <SectionTitle>Parking Spots Heatmap</SectionTitle>
                <MapFrame>
                  <CityMap />
                  <MenuButton aria-label="menu">
                    <MenuLine /><MenuLine /><MenuLine />
                  </MenuButton>
                  <EsriMark>
                    <EsriSmall>POWERED BY</EsriSmall>
                    <EsriWord>esri</EsriWord>
                  </EsriMark>
                  <TimeBar>
                    <PlayControls>
                      <ControlIcon width="18" height="24" viewBox="0 0 18 24"><polygon points="1,2 16,12 1,22" /></ControlIcon>
                      <ControlIcon width="16" height="28" viewBox="0 0 16 28"><polyline points="15,1 1,14 15,27" /></ControlIcon>
                      <ControlIcon width="16" height="28" viewBox="0 0 16 28" $shift={7}><polyline points="1,1 15,14 1,27" /></ControlIcon>
                    </PlayControls>
                    <Timeline>
                      <Track>
                        <TrackRange />
                        <Handle $left={4} />
                        <Handle $left={112} />
                      </Track>
                      <TickRow>{Array.from({ length: 11 }, (_, i) => <Tick key={i} />)}</TickRow>
                      <TimeLabels>
                        <span>12:16:37 AM</span>
                        <TimeMiddle>12:16:37 AM - 1:29:35 AM</TimeMiddle>
                        <TimeEnd>12:26:20 PM</TimeEnd>
                      </TimeLabels>
                    </Timeline>
                  </TimeBar>
                </MapFrame>
              </HeatmapBlock>
            </LeftColumn>
            <Section $inset={14} $divider={16}>
              <SectionTitle>Parking Spot Availability per Hour</SectionTitle>
              <HourChart>
                <HourAxisWrap>
                  <VerticalTitle $width={26} $height={130}>Hourly Bucket</VerticalTitle>
                </HourAxisWrap>
                <HourMain>
                  <HourRows>
                    {HOURS.map((pct, h) => (
                      <HourRow key={h}>
                        <HourLabel>{`${pad(h)}:00-${pad(h)}:59`}</HourLabel>
                        <HourTrack><HourFill style={{ width: `${pct}%` }} /></HourTrack>
                      </HourRow>
                    ))}
                    <VGrid $pct={0} />
                    <VGrid $pct={50} />
                    <VGrid $pct={100} />
                  </HourRows>
                  <HourTicks>
                    <HourTick>0%</HourTick>
                    <HourTick>50%</HourTick>
                    <HourTick>100%</HourTick>
                  </HourTicks>
                  <HourAxisTitle>Percentage of availability</HourAxisTitle>
                </HourMain>
              </HourChart>
            </Section>
          </Panel>
        </Body>
      </Report>
    </Stage>
    <Footer>
      <LogoMark width={50} height={37} />
      <FooterWords>
        <FooterWord>CITY OF</FooterWord>
        <FooterWord>MELBOURNE</FooterWord>
      </FooterWords>
    </Footer>
  </Page>
);

export default App;
